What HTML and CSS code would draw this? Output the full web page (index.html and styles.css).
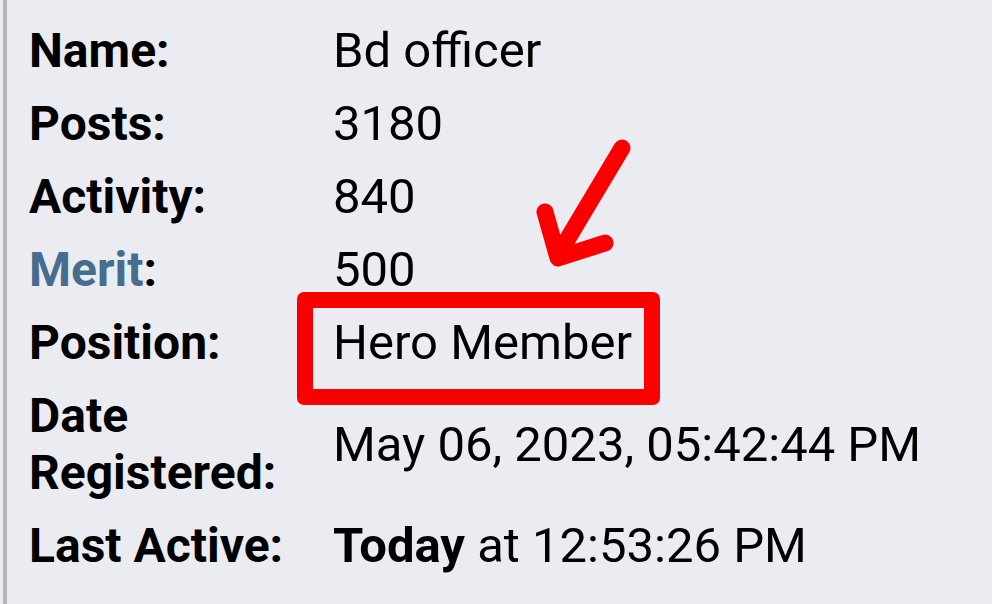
FILE: index.html
```html
<!DOCTYPE html>
<html>
<head>
<meta charset="utf-8">
<link rel="stylesheet" href="styles.css">
</head>
<body>
<div class="panel">
  <div class="profile">
    <div class="label">Name:</div><div class="value">Bd officer</div>
    <div class="label">Posts:</div><div class="value">3180</div>
    <div class="label">Activity:</div><div class="value">840</div>
    <div class="label"><span class="link">Merit</span>:</div><div class="value">500</div>
    <div class="label">Position:</div><div class="value">Hero Member</div>
    <div class="label">Date Registered:</div><div class="value">May 06, 2023, 05:42:44 PM</div>
    <div class="label">Last Active:</div><div class="value"><b>Today</b> at 12:53:26 PM</div>
  </div>
  <div class="highlight"></div>
  <svg class="arrow" width="120" height="150" viewBox="0 0 120 150">
    <path d="M102 18 L38 125 M25 82 L38 128 L85 113" fill="none" stroke="#fb0000" stroke-width="17" stroke-linecap="round" stroke-linejoin="round"/>
  </svg>
</div>
</body>
</html>
```

FILE: styles.css
```css
html, body {
  margin: 0;
  padding: 0;
  background: #ebecf2;
}
.panel {
  position: relative;
  margin-left: 3px;
  border-left: 4px solid #b4b4b9;
  height: 604px;
  box-sizing: border-box;
  padding: 14px 0 0 22px;
  font-family: Roboto, "Liberation Sans", sans-serif;
  font-size: 48px;
  color: #000;
}
.profile {
  display: grid;
  grid-template-columns: 304px auto;
  align-items: center;
}
.label, .value {
  padding: 8px 0;
  line-height: 57px;
}
.label {
  font-weight: 700;
  width: 270px;
}
.value {
  font-weight: 400;
  font-size: 49px;
}
.value b {
  font-weight: 700;
}
.link {
  color: #476c8e;
}
.highlight {
  position: absolute;
  left: 290px;
  top: 292px;
  width: 363px;
  height: 113px;
  box-sizing: border-box;
  border: 16px solid #fb0000;
  border-radius: 7px;
}
.arrow {
  position: absolute;
  left: 513px;
  top: 130px;
}
```
